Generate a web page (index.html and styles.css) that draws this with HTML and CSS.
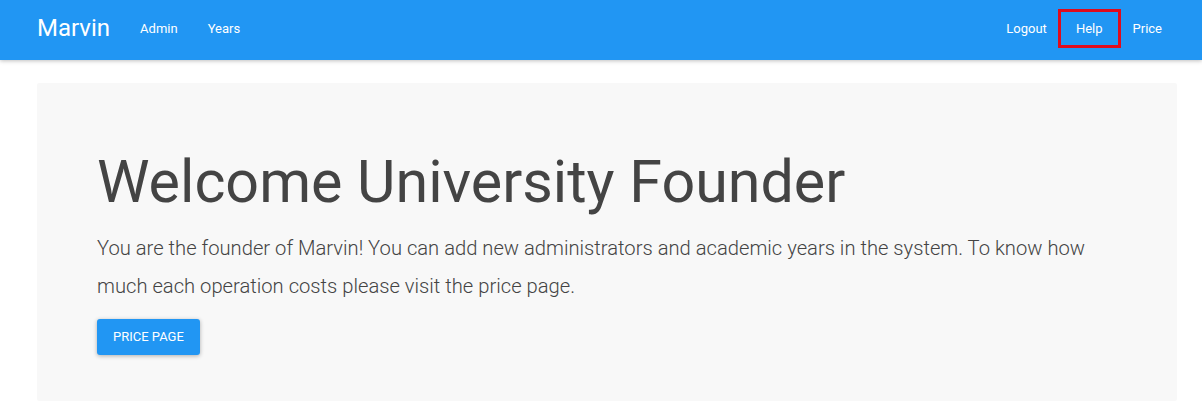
FILE: index.html
```html
<!DOCTYPE html>
<html>
<head>
<meta charset="utf-8">
<link rel="stylesheet" href="styles.css">
</head>
<body>
<nav class="navbar">
  <div class="nav-inner">
    <div class="nav-left">
      <a class="brand" href="#">Marvin</a>
      <a class="nav-link" href="#">Admin</a>
      <a class="nav-link" href="#">Years</a>
    </div>
    <div class="nav-right">
      <a class="nav-link" href="#">Logout</a>
      <a class="nav-link highlighted" href="#">Help</a>
      <a class="nav-link" href="#">Price</a>
    </div>
  </div>
</nav>
<main class="container">
  <section class="jumbotron">
    <h1 class="title">Welcome University Founder</h1>
    <p class="lead">You are the founder of Marvin! You can add new administrators and academic years in the system. To know how much each operation costs please visit the price page.</p>
    <a class="btn" href="#">Price page</a>
  </section>
</main>
</body>
</html>
```
FILE: styles.css
```css
* { box-sizing: border-box; }
html, body { margin: 0; padding: 0; }
body {
  font-family: Roboto, "Noto Sans", sans-serif;
  background: #fff;
  color: #444;
  overflow: hidden;
}
a { text-decoration: none; }
.navbar {
  height: 60px;
  background: #2196f3;
  box-shadow: 0 1px 4px rgba(0,0,0,0.25);
  position: relative;
  z-index: 1;
}
.nav-inner {
  margin-left: 37px;
  width: 1140px;
  height: 60px;
  padding-bottom: 4px;
  display: flex;
  justify-content: space-between;
  align-items: center;
}
.nav-left, .nav-right { display: flex; align-items: center; }
.brand {
  color: #fff;
  font-size: 24px;
  line-height: 56px;
  padding-right: 15px;
}
.nav-link {
  color: #fff;
  font-size: 13px;
  line-height: 33px;
  padding: 0 15px;
}
.nav-left .nav-link:first-of-type { margin-left: 1px; }
.nav-right .nav-link:first-child { margin-right: -1px; }
.highlighted {
  outline: 3px solid #e00b1c;
}
.container {
  margin-left: 37px;
  width: 1140px;
  padding-top: 23px;
}
.jumbotron {
  background: #f8f8f8;
  border-radius: 2px;
  padding: 66px 60px 46px;
}
.title {
  margin: 0;
  font-size: 59.2px;
  font-weight: 400;
  line-height: 1.1;
  color: #444;
}
.lead {
  margin: 15px 0 14px;
  font-size: 20.2px;
  font-weight: 300;
  line-height: 38px;
  color: #444;
}
.btn {
  display: inline-block;
  background: #2196f3;
  color: #fff;
  font-size: 13px;
  text-transform: uppercase;
  line-height: 36px;
  height: 36px;
  padding: 0 16px;
  border-radius: 3px;
  box-shadow: 0 1px 4px rgba(0,0,0,0.3);
}
```
